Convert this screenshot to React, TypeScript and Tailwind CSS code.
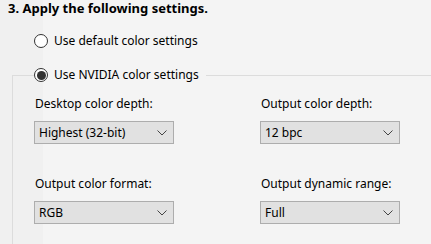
import React from "react";

const font = { fontFamily: '"Noto Sans", "Open Sans", sans-serif' };

function Radio({ checked, label }: { checked?: boolean; label: string }) {
  return (
    <div className="flex items-center h-4">
      <span className="w-[14px] h-[14px] rounded-full border border-[#333333] bg-white flex items-center justify-center">
        {checked && <span className="w-[9px] h-[9px] rounded-full bg-[#333333]" />}
      </span>
      <span className="ml-[6px] text-[12px] leading-4 text-black">{label}</span>
    </div>
  );
}

function Chevron() {
  return (
    <svg width="10" height="6" viewBox="0 0 10 6" className="shrink-0">
      <path d="M0.5 0.5 L5 5 L9.5 0.5" fill="none" stroke="#444" strokeWidth="1" />
    </svg>
  );
}

function Select({ value }: { value: string }) {
  return (
    <div className="w-[140px] h-[23px] border border-[#adadad] bg-[#e1e1e1] flex items-center justify-between pl-[4px] pr-[6px]">
      <span className="text-[12px] leading-4 text-black">{value}</span>
      <Chevron />
    </div>
  );
}

function Field({ label, value }: { label: string; value: string }) {
  return (
    <div className="flex flex-col">
      <div className="text-[12px] leading-4 text-black pl-[1px]">{label}</div>
      <div className="mt-[9px]">
        <Select value={value} />
      </div>
    </div>
  );
}

export default function App() {
  return (
    <div
      className="w-[431px] h-[244px] overflow-hidden bg-[linear-gradient(to_right,#f0f0f0_43px,#f4f4f4_43px)] flex flex-col"
      style={font}
    >
      <div className="pl-[8px] pt-[0px] text-[13px] leading-[16px] font-bold text-black">
        3. Apply the following settings.
      </div>
      <div className="pl-[34px] mt-[17px]">
        <Radio label="Use default color settings" />
      </div>
      <fieldset className="ml-[12px] mt-[18px] border-t border-l border-[#dcdcdc] pb-4 flex-1">
        <legend className="ml-[21px] pr-[7px]">
          <Radio checked label="Use NVIDIA color settings" />
        </legend>
        <div className="pl-[21px] pt-[13px] grid grid-cols-[226px_140px] gap-y-[32px]">
          <Field label="Desktop color depth:" value="Highest (32-bit)" />
          <Field label="Output color depth:" value="12 bpc" />
          <Field label="Output color format:" value="RGB" />
          <Field label="Output dynamic range:" value="Full" />
        </div>
      </fieldset>
    </div>
  );
}
